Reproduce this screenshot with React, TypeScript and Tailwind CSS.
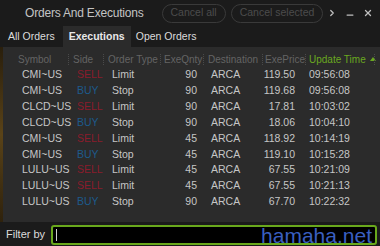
import { ChevronRight, Minus, X } from "lucide-react";

type Row = {
  symbol: string;
  side: "SELL" | "BUY";
  type: string;
  qty: number;
  dest: string;
  price: string;
  time: string;
};

const rows: Row[] = [
  { symbol: "CMI~US", side: "SELL", type: "Limit", qty: 90, dest: "ARCA", price: "119.50", time: "09:56:08" },
  { symbol: "CMI~US", side: "BUY", type: "Stop", qty: 90, dest: "ARCA", price: "119.68", time: "09:56:08" },
  { symbol: "CLCD~US", side: "SELL", type: "Limit", qty: 90, dest: "ARCA", price: "17.81", time: "10:03:02" },
  { symbol: "CLCD~US", side: "BUY", type: "Stop", qty: 90, dest: "ARCA", price: "18.06", time: "10:04:10" },
  { symbol: "CMI~US", side: "SELL", type: "Limit", qty: 45, dest: "ARCA", price: "118.92", time: "10:14:19" },
  { symbol: "CMI~US", side: "BUY", type: "Stop", qty: 45, dest: "ARCA", price: "119.10", time: "10:15:28" },
  { symbol: "LULU~US", side: "SELL", type: "Limit", qty: 45, dest: "ARCA", price: "67.55", time: "10:21:09" },
  { symbol: "LULU~US", side: "SELL", type: "Limit", qty: 45, dest: "ARCA", price: "67.55", time: "10:21:13" },
  { symbol: "LULU~US", side: "BUY", type: "Stop", qty: 90, dest: "ARCA", price: "67.70", time: "10:22:32" },
];

function Sep() {
  return <span className="shrink-0 h-[11px] border-l border-dotted border-[#4a4a4a]" />;
}

export default function App() {
  return (
    <div className="relative w-[380px] h-[246px] overflow-hidden bg-[#1b1b1b] flex flex-col font-['Liberation_Sans',Arial,sans-serif] text-[10.5px] whitespace-nowrap">
      {/* Title bar */}
      <div className="h-[26px] shrink-0 flex items-center pl-[25px] pr-[7px]">
        <span className="text-[12px] tracking-[-0.2px] text-[#c4c4c4]">Orders And Executions</span>
        <div className="ml-[18px] flex gap-[5px]">
          <button className="h-[19px] px-[8px] rounded-full border border-[#3a3a3a] text-[#4c4c4c] text-[10.5px]">
            Cancel all
          </button>
          <button className="h-[19px] px-[8px] rounded-full border border-[#3a3a3a] text-[#4c4c4c] text-[10.5px]">
            Cancel selected
          </button>
        </div>
        <div className="ml-auto flex items-center gap-[8px] text-[#c0c0c0]">
          <ChevronRight className="w-[10px] h-[10px]" strokeWidth={3} />
          <Minus className="w-[10px] h-[10px] mt-[4px]" strokeWidth={3} />
          <X className="w-[10px] h-[10px]" strokeWidth={3} />
        </div>
      </div>

      {/* Tabs */}
      <div className="h-[21px] shrink-0 flex items-stretch text-[10.5px]">
        <div className="px-[8px] flex items-center text-[#dcdcdc]">All Orders</div>
        <div className="px-[6px] flex items-center bg-[#2b2b2b] text-[#e8e8e8] font-bold">Executions</div>
        <div className="px-[5px] flex items-center text-[#dcdcdc]">Open Orders</div>
      </div>

      {/* Table area */}
      <div className="flex h-[175px] shrink-0">
        <div className="w-[3px] bg-gradient-to-b from-[#2a1f0c] via-[#5a4318] to-[#2f220c]" />
        <div className="flex-1 bg-[#2b2b2b] pt-[4px] pl-[11px]">
          <div className="h-[16px] flex items-center text-[#646464] text-[10px]">
            <span className="shrink-0 w-[54px] pl-[4px]">Symbol</span>
            <Sep />
            <span className="shrink-0 w-[34px] pl-[4px]">Side</span>
            <Sep />
            <span className="shrink-0 w-[56px] pl-[4px]">Order Type</span>
            <Sep />
            <span className="shrink-0 w-[42px] pl-[3px]">ExeQnty</span>
            <Sep />
            <span className="shrink-0 w-[58px] pl-[4px]">Destination</span>
            <Sep />
            <span className="shrink-0 w-[42px] pl-[2px]">ExePrice</span>
            <Sep />
            <span className="shrink-0 w-[68px] pl-[3px] flex items-center text-[#6aa820]">
              Update Time
              <span className="ml-[4px] w-0 h-0 border-l-[3px] border-r-[3px] border-b-[4px] border-l-transparent border-r-transparent border-b-[#6aa820]" />
            </span>
            <Sep />
          </div>
          <div className="flex flex-col">
            {rows.map((r, i) => (
              <div key={i} className="h-[15.9px] flex items-center text-[#c6c6c6]">
                <span className="shrink-0 w-[55px] pl-[8px]">{r.symbol}</span>
                <span className={`shrink-0 w-[35px] pl-[8px] ${r.side === "SELL" ? "text-[#8a1c2c]" : "text-[#1d5a8c]"}`}>
                  {r.side}
                </span>
                <span className="shrink-0 w-[56px] pl-[8px]">{r.type}</span>
                <span className="shrink-0 w-[43px] pr-[6px] text-right">{r.qty}</span>
                <span className="shrink-0 w-[58px] pl-[8px]">{r.dest}</span>
                <span className="shrink-0 w-[42px] pr-[8px] text-right">{r.price}</span>
                <span className="shrink-0 w-[68px] pl-[6px]">{r.time}</span>
              </div>
            ))}
          </div>
        </div>
      </div>

      {/* Filter row */}
      <div className="flex-1 flex items-end pb-[1px] pl-[6px] pr-[3px]">
        <span className="text-[11px] text-[#dcdcdc] mb-[3px]">Filter by</span>
        <div className="ml-[6px] flex-1 h-[20px] rounded-[3px] border-2 border-[#69a81c] bg-black flex items-center pl-[3px]">
          <span className="w-px h-[12px] bg-[#d0d0d0]" />
        </div>
      </div>

      <span className="absolute right-[8px] bottom-0 text-[21px] leading-none text-[#3a5fc0]">hamaha.net</span>
    </div>
  );
}
